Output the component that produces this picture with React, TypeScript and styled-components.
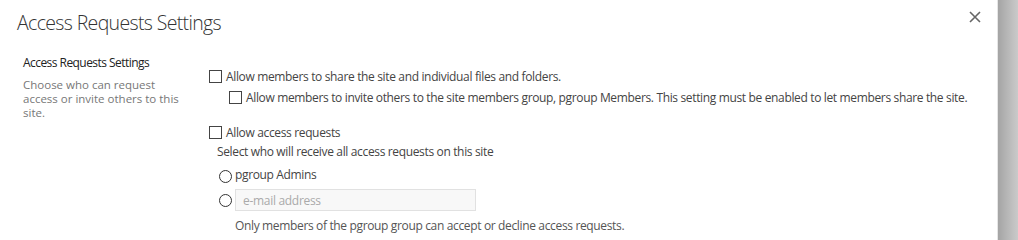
import styled, { createGlobalStyle } from 'styled-components';

const GlobalStyle = createGlobalStyle`
  html, body {
    margin: 0;
    padding: 0;
    overflow: hidden;
    background: #fff;
  }
  body {
    font-family: "Open Sans", "Noto Sans", "Liberation Sans", sans-serif;
  }
`;

function CloseIcon() {
  return (
    <svg width="12" height="12" viewBox="0 0 12 12">
      <path d="M1 1 L11 11 M11 1 L1 11" stroke="#666" strokeWidth="1.6" fill="none" />
    </svg>
  );
}

function App() {
  return (
    <>
      <GlobalStyle />
      <StyledPage>
        <StyledPanel>
          <StyledHeader>
            <h1>Access Requests Settings</h1>
            <StyledClose type="button" aria-label="Close">
              <CloseIcon />
            </StyledClose>
          </StyledHeader>
          <StyledSection>
            <StyledAside>
              <h3>Access Requests Settings</h3>
              <p>Choose who can request access or invite others to this site.</p>
            </StyledAside>
            <StyledOptions>
              <StyledCheckRow>
                <StyledCheckbox type="checkbox" />
                <span>Allow members to share the site and individual files and folders.</span>
              </StyledCheckRow>
              <StyledCheckRow $indent>
                <StyledCheckbox type="checkbox" />
                <span>
                  Allow members to invite others to the site members group, pgroup Members. This
                  setting must be enabled to let members share the site.
                </span>
              </StyledCheckRow>
              <StyledCheckRow $gap>
                <StyledCheckbox type="checkbox" />
                <span>Allow access requests</span>
              </StyledCheckRow>
              <StyledHint>Select who will receive all access requests on this site</StyledHint>
              <StyledRadioRow $top={4}>
                <StyledRadio type="radio" name="recipient" />
                <StyledRadioText>pgroup Admins</StyledRadioText>
              </StyledRadioRow>
              <StyledRadioRow $top={2}>
                <StyledRadio type="radio" name="recipient" />
                <StyledEmail placeholder="e-mail address" disabled />
              </StyledRadioRow>
              <StyledNote>Only members of the pgroup group can accept or decline access requests.</StyledNote>
            </StyledOptions>
          </StyledSection>
        </StyledPanel>
        <StyledShade />
      </StyledPage>
    </>
  );
}

const StyledPage = styled.div`
  display: flex;
  width: 1018px;
  height: 100vh;
  min-height: 235px;
`;

const StyledPanel = styled.div`
  width: 997px;
  flex-shrink: 0;
  background: #fff;
  border-right: 1px solid #e6e6e6;
`;

const StyledShade = styled.div`
  flex: 1;
  background: linear-gradient(to right, #a4a4a4, #b4b4b4 40%, #cacaca);
`;

const StyledHeader = styled.div`
  display: flex;
  align-items: flex-start;
  justify-content: space-between;
  padding: 9px 16px 0 17px;

  & > h1 {
    margin: 0;
    font-weight: 300;
    font-size: 19.5px;
    line-height: 28px;
    color: #333;
    letter-spacing: -0.65px;
  }
`;

const StyledClose = styled.button`
  margin-top: 2px;
  width: 12px;
  height: 12px;
  padding: 0;
  border: 0;
  background: none;
  display: flex;
`;

const StyledSection = styled.div`
  display: flex;
  padding: 19px 0 0 23px;
`;

const StyledAside = styled.div`
  width: 186px;
  flex-shrink: 0;

  & > h3 {
    margin: 0 0 8px;
    font-weight: 400;
    font-size: 12px;
    line-height: 14px;
    color: #222;
    letter-spacing: -0.55px;
  }

  & > p {
    margin: 0;
    width: 158px;
    font-size: 11.5px;
    line-height: 14px;
    color: #777;
    letter-spacing: 0;
  }
`;

const StyledOptions = styled.div`
  display: flex;
  flex-direction: column;
  padding-top: 10px;
  font-size: 12px;
  color: #444;
  letter-spacing: -0.35px;
`;

const StyledCheckRow = styled.label<{ $indent?: boolean; $gap?: boolean }>`
  display: flex;
  align-items: center;
  gap: 4px;
  height: 20px;
  margin-left: ${({ $indent }) => ($indent ? '20px' : '0')};
  margin-top: ${({ $gap }) => ($gap ? '14px' : '0')};
  margin-bottom: 1px;
  white-space: nowrap;
`;

const StyledCheckbox = styled.input`
  appearance: none;
  margin: 0;
  width: 13px;
  height: 13px;
  border: 1px solid #444;
  background: #fff;
  box-sizing: border-box;
`;

const StyledHint = styled.div`
  margin: 0 0 0 8px;
  line-height: 18px;
`;

const StyledRadioRow = styled.label<{ $top: number }>`
  display: flex;
  align-items: center;
  gap: 3px;
  margin: ${({ $top }) => $top}px 0 0 10px;
  height: 22px;
`;

const StyledRadioText = styled.span`
  margin-top: -3px;
`;

const StyledRadio = styled.input`
  appearance: none;
  margin: 0;
  width: 13px;
  height: 13px;
  border: 1px solid #333;
  border-radius: 50%;
  background: #fff;
  box-sizing: border-box;
`;

const StyledEmail = styled.input`
  box-sizing: border-box;
  width: 241px;
  height: 22px;
  margin: 0;
  border: 1px solid #e1e1e1;
  background: #f8f8f8;
  padding: 0 7px;
  font-family: inherit;
  font-size: 12px;
  letter-spacing: -0.3px;
  color: #aaa;

  &::placeholder {
    color: #aaa;
  }
`;

const StyledNote = styled.div`
  margin: 6px 0 0 26px;
  line-height: 18px;
  color: #555;
`;

export default App;
